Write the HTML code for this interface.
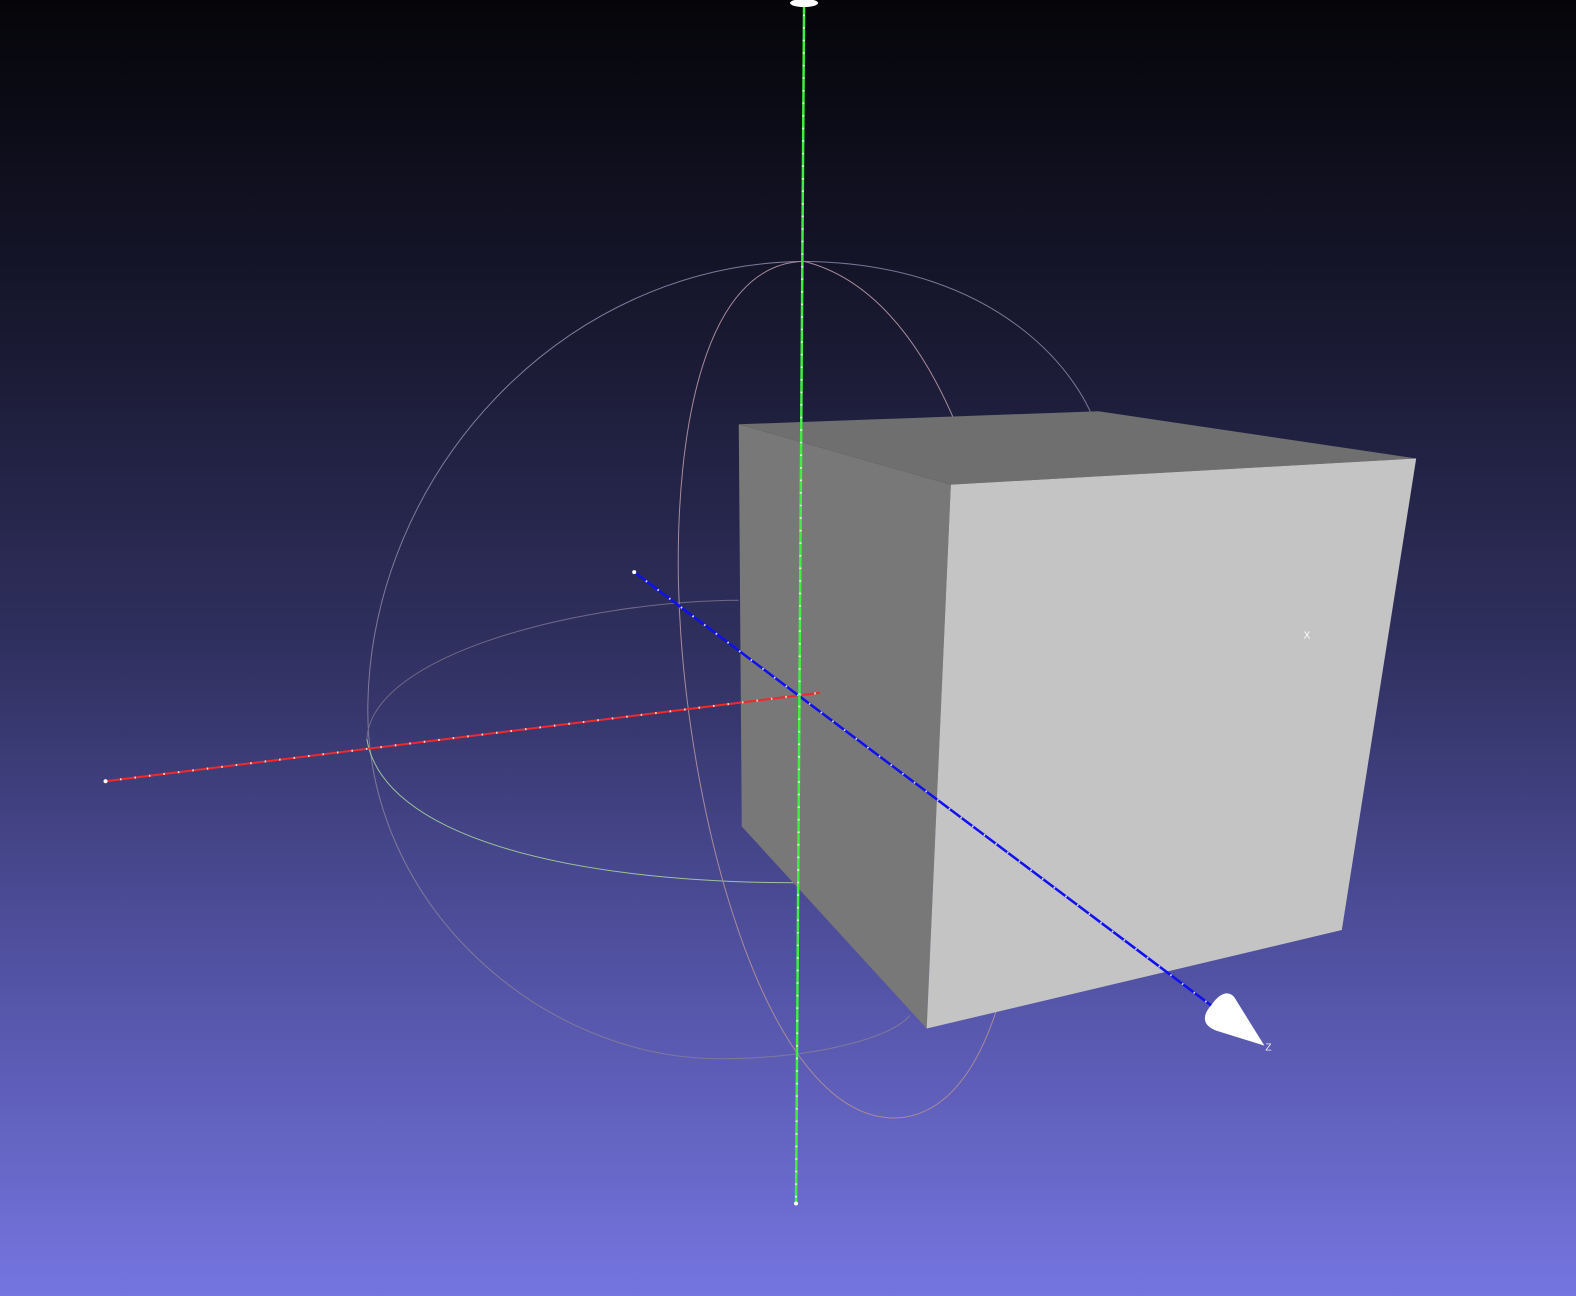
<!DOCTYPE html>
<html><head><style>html,body{margin:0;padding:0;width:1576px;height:1296px;overflow:hidden}</style></head>
<body>
<svg width="1576" height="1296" viewBox="0 0 1568 1289" preserveAspectRatio="none" xmlns="http://www.w3.org/2000/svg">
<defs><linearGradient id="bg" x1="0" y1="0" x2="0" y2="1">
<stop offset="0" stop-color="#050509"/><stop offset="0.25" stop-color="#181830"/><stop offset="0.5" stop-color="#303060"/><stop offset="0.75" stop-color="#5252a4"/><stop offset="1" stop-color="#7575e0"/></linearGradient></defs>
<rect width="1568" height="1289" fill="url(#bg)"/>
<g fill="none" stroke-width="1">
<path d="M800 260 C1000 262 1080 380 1092 430" stroke="#7a7694"/>
<path d="M800 260 C560 262 370 470 366 700 C362 900 540 1055 720 1053 C820 1052 890 1030 905 1010" stroke="#7e7a9a"/>
<path d="M365 735 C370 650 580 598 735 597" stroke="#6e6a88"/>
<path d="M365 735 C380 830 560 878 795 878 C1040 878 1225 810 1225 728" stroke="#9cc49c"/>
<path d="M800 260 C700 262 672 430 675 580 C680 800 760 1112 890 1112 C980 1110 1018 960 1018 800 C1018 600 960 300 800 260" stroke="#a88a9a"/>
</g>
<polygon points="735,422 1093,409 1409,456 946,482" fill="#6f6f6f"/>
<polygon points="735,422 946,482 922,1023 738,822" fill="#787878"/>
<polygon points="946,482 1409,456 1335,925 922,1023" fill="#c4c4c4"/>
<g fill="none">
<line x1="105" y1="777" x2="816" y2="689" stroke="#ee2a2a" stroke-width="2"/>
<line x1="105" y1="777" x2="816" y2="689" stroke="#ffdddd" stroke-width="2" stroke-dasharray="1.5 13"/>
<line x1="631" y1="569" x2="1205" y2="1000" stroke="#1010ee" stroke-width="2.5"/>
<line x1="631" y1="569" x2="1205" y2="1000" stroke="#ddddff" stroke-width="2" stroke-dasharray="1.5 13"/>
<line x1="800" y1="2" x2="792" y2="1197" stroke="#40ee40" stroke-width="2.5"/>
<line x1="800" y1="2" x2="792" y2="1197" stroke="#e0ffe0" stroke-width="2" stroke-dasharray="1.5 11"/>
</g>
<circle cx="105" cy="777" r="2" fill="#fff"/><circle cx="631" cy="569" r="2" fill="#fff"/><circle cx="792" cy="1197" r="2" fill="#fff"/>
<ellipse cx="800" cy="3" rx="14" ry="4" fill="#fff"/>
<path d="M1205 1000 C1215 985 1225 985 1230 995 L1258 1040 L1210 1025 C1196 1020 1196 1010 1205 1000 Z" fill="#fff"/>
<text x="1259" y="1045" fill="#eee" font-family="Liberation Sans, sans-serif" font-size="10">Z</text>
<text x="1297" y="635" fill="#fff" font-family="Liberation Sans, sans-serif" font-size="10">X</text>
</svg>
</body></html>
